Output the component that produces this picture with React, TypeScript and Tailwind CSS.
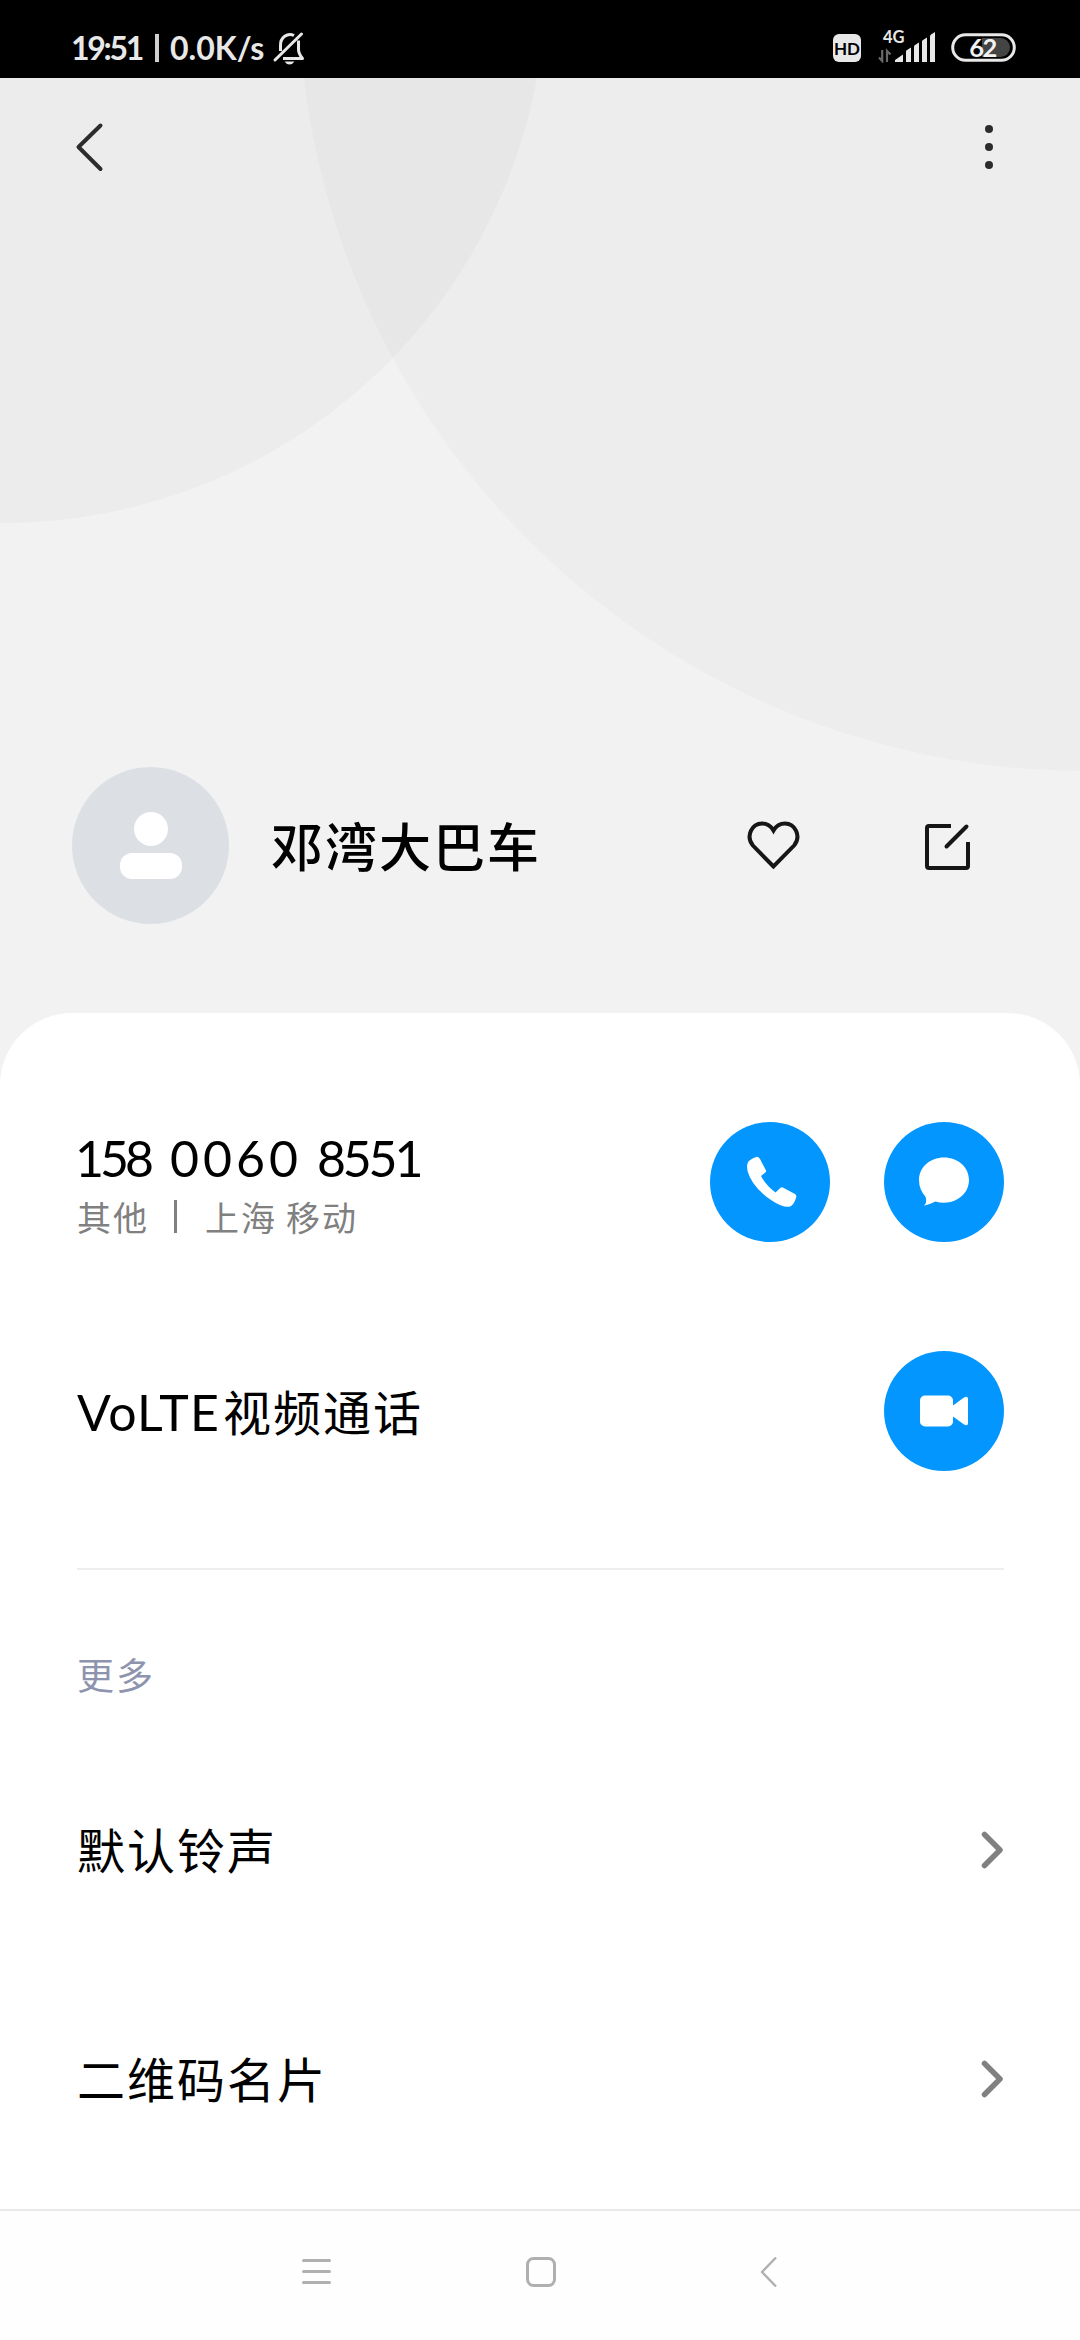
import type { ReactNode } from "react";

const latin = "font-['Lato','Noto_Sans_CJK_SC',sans-serif]";
const cjk = "font-['Noto_Sans_CJK_SC',sans-serif]";

function StatusBar() {
  return (
    <header className="flex h-[78px] items-start justify-between bg-black pl-[71px] pr-[64px] text-[#e8e8e8]">
      <div className={`${latin} flex items-start pt-[28px] text-[32px] leading-[40px] font-bold`}>
        <span className="w-[72px] whitespace-nowrap tracking-[-2.3px]">19:51</span>
        <span className="mt-[6px] ml-[12px] h-[28px] w-[4px] bg-[#d0d0d0]" />
        <span className="ml-[11px] w-[96px] whitespace-nowrap">0.0K/s</span>
        <svg className="ml-[6px] mt-[2px]" width="36" height="36" viewBox="0 0 36 36" fill="none" stroke="currentColor" strokeWidth="3">
          <path d="M8.500 21v-5.500A9.500 10.500 0 0 1 22 5.500" />
          <path d="M26.500 10.500v9c0 3.500 1.500 6 4 9H11" strokeLinejoin="round" />
          <path d="M3 30 29.500 4" strokeLinecap="round" />
          <path d="M12.500 31.500h10q-2 3-5 3t-5-3z" fill="currentColor" stroke="none" />
        </svg>
      </div>
      <div className="flex items-start pt-[23px]">
        <span className="mt-[11px] flex h-[28px] w-[28px] items-center justify-center rounded-[6px] bg-[#e8e8e8] font-['Lato',sans-serif] text-[17px] leading-none font-bold text-black">
          <span>HD</span>
        </span>
        <svg className="ml-[17px]" width="58" height="40" viewBox="0 -8 58 40" fill="#e8e8e8">
          <text x="5" y="12" fontSize="16.500" fontWeight="700" fontFamily="Lato, sans-serif">4G</text>
          <path d="M17 31v-2l8-5.500V31z M28 31V20.500q0-.8 1-1.500l4-2.500V31z M36 31V15.500q0-.8 1-1.500l4-2.500V31z M44 31V10.500q0-.8 1-1.500l4-2.500V31z M52 31V5.500q0-1 1-2l4-2.500V31z" />
          <path d="M4.200 19v11L1 26.500M9 31V20l3.500 3.500" fill="none" stroke="#6a6a6a" strokeWidth="2.200" />
        </svg>
        <svg className="ml-[15px] mt-[10px]" width="65" height="29" viewBox="0 0 65 29">
          <rect x="1.700" y="1.700" width="61.600" height="25.600" rx="12.800" fill="none" stroke="#e8e8e8" strokeWidth="3" />
          <path d="M31 5h18.500a9.500 9.500 0 0 1 0 19H31z" fill="#444" />
          <text x="31.500" y="23.500" textAnchor="middle" fontSize="25.500" fontWeight="700" fontFamily="Lato, sans-serif" fill="#f2f2f2" letterSpacing="-1.600">62</text>
        </svg>
      </div>
    </header>
  );
}

function Avatar() {
  return (
    <div className="flex h-[157px] w-[157px] flex-col items-center rounded-full bg-[#dcdfe4] pt-[45px]">
      <span className="h-[34px] w-[34px] rounded-full bg-white" />
      <span className="mt-[7px] h-[26px] w-[62px] rounded-[12px] bg-white" />
    </div>
  );
}

function Hero() {
  return (
    <section className="relative h-[935px] overflow-hidden bg-[#f2f2f2]">
      <svg className="absolute inset-0" width="1080" height="935" viewBox="0 78 1080 935">
        <circle cx="3" cy="-20" r="543" fill="#000" fillOpacity="0.025" />
        <circle cx="1085" cy="-16" r="787" fill="#000" fillOpacity="0.021" />
      </svg>
      <div className="relative flex h-full flex-col">
        <nav className="flex h-[138px] items-center justify-between pl-[73px] pr-[87px]">
          <svg width="34" height="52" viewBox="0 0 34 52" fill="none" stroke="#2c2c2c" strokeWidth="4" strokeLinecap="round" strokeLinejoin="round">
            <path d="M27.500 4.500 5.500 26l22 22" />
          </svg>
          <div className="flex flex-col gap-[10px]">
            <span className="h-[8px] w-[8px] rounded-full bg-[#2c2c2c]" />
            <span className="h-[8px] w-[8px] rounded-full bg-[#2c2c2c]" />
            <span className="h-[8px] w-[8px] rounded-full bg-[#2c2c2c]" />
          </div>
        </nav>
        <div className="mt-[551px] flex h-[157px] items-center pl-[72px]">
          <Avatar />
          <h1 className={`${cjk} ml-[42px] -mt-[1px] w-[476px] text-[52px] leading-[76px] font-medium tracking-[2px] text-black`}>邓湾大巴车</h1>
          <svg width="54" height="50" viewBox="0 0 54 50" fill="none" stroke="#161616" strokeWidth="4">
            <path d="M26.500 45.500 5.700 24.300C-1.500 15 5 2.500 15 2.500q7.500 0 11.500 7 4-7 11.500-7c10 0 16.500 12.500 9.300 21.800z" />
          </svg>
          <svg className="ml-[123px] mt-[3px]" width="48" height="50" viewBox="0 0 48 50" fill="none" stroke="#161616" strokeWidth="4">
            <path d="M27 4H5q-2 0-2 2v38q0 2 2 2h37q2 0 2-2V20" />
            <path d="M22.500 24.500 42.500 4.500" strokeLinecap="round" />
          </svg>
        </div>
      </div>
    </section>
  );
}

function RoundAction({ children }: { children: ReactNode }) {
  return (
    <button className="h-[120px] w-[120px] rounded-full bg-[#0396ff]">
      <svg width="120" height="120" viewBox="0 0 120 120" fill="#fff">
        {children}
      </svg>
    </button>
  );
}

function Chevron() {
  return (
    <svg width="24" height="40" viewBox="0 0 24 40" fill="none" stroke="#808080" strokeWidth="5.500" strokeLinecap="round" strokeLinejoin="round">
      <path d="M4.500 4.500 20 20 4.500 35.500" />
    </svg>
  );
}

function MenuRow({ label }: { label: string }) {
  return (
    <div className="flex h-[229px] items-center justify-between">
      <span className={`${cjk} -mt-[4px] text-[48px] leading-[70px] tracking-[2px] text-black`}>{label}</span>
      <Chevron />
    </div>
  );
}

export default function App() {
  return (
    <div className="flex h-[2340px] w-[1080px] flex-col overflow-hidden bg-[#f2f2f2]">
      <StatusBar />
      <Hero />
      <main className="h-[1196px] shrink-0 rounded-t-[72px] bg-white pt-[54px] pr-[76px] pl-[77px]">
        <div className="flex h-[230px] items-center justify-between">
          <div className="mt-[7px]">
            <p className={`${latin} -mt-px flex text-[50px] leading-[60px] whitespace-pre text-black`}>
              <span className="-ml-[2px] w-[95px] tracking-[-4px]">{"158 "}</span>
              <span className="w-[147px] tracking-[4px]">{"0060 "}</span>
              <span className="tracking-[-3.200px]">8551</span>
            </p>
            <p className={`${cjk} mt-[3px] flex h-[52px] items-center text-[34px] leading-[52px] tracking-[2px] text-[#808080]`}>
              <span>其他</span>
              <span className="ml-[25px] h-[33px] w-[3px] bg-[#808080]" />
              <span className="ml-[28px]">上海</span>
              <span className="ml-[9px]">移动</span>
            </p>
          </div>
          <div className="flex gap-[54px]">
            <RoundAction>
              <path d="M37 44q0-6 9-9 2.500-.7 4 2l6 11.500q.5 1-.5 1.800L51 54q5 9.500 14.500 16.500l5-4.700q1-.8 2.300-.2L85 72q2 1.300 1 4-2.500 8-7 8.800-7 .7-18-6.800Q42 65 37.500 49z" />
            </RoundAction>
            <RoundAction>
              <path d="M60 35.500c14 0 25 9.800 25 22.500S74 80.700 60 80.700q-4.500 0-8.500-1.200-6 3-11.500 4.200 3.500-3.500 1.500-9Q35 67.500 35 58c0-12.700 11-22.500 25-22.500z" />
            </RoundAction>
          </div>
        </div>
        <div className="flex h-[228px] items-center justify-between">
          <span className={`${latin} flex items-baseline text-black`}>
            <span className="w-[146px] text-[50px] leading-[70px] whitespace-nowrap tracking-[1.200px]">VoLTE</span>
            <span className={`${cjk} text-[48px] leading-[70px] tracking-[2px]`}>视频通话</span>
          </span>
          <RoundAction>
            <rect x="36" y="44.500" width="33" height="31" rx="5" />
            <path d="M69 54.500 80 46.500q4-2 4 1.500v24q0 3.500-4 1.500l-11-8z" />
          </RoundAction>
        </div>
        <div className="mt-[43px] h-[2px] bg-[#eeeeee]" />
        <h2 className={`${cjk} mt-[76px] h-[56px] text-[37px] leading-[56px] tracking-[2px] text-[#8e94ad]`}>更多</h2>
        <div className="mt-[33px]">
          <MenuRow label="默认铃声" />
          <MenuRow label="二维码名片" />
        </div>
      </main>
      <footer className="flex h-[131px] shrink-0 items-start border-t-2 border-[#e9e9e9] bg-[#fefefe] pt-[43px] pl-[299px]">
        <svg width="34" height="36" viewBox="0 0 34 36" stroke="#b0b0b0" strokeWidth="3" strokeLinecap="round">
          <path d="M4.500 6.500h26M4.500 17.500h26M4.500 28.500h26" />
        </svg>
        <svg className="ml-[192px]" width="34" height="36" viewBox="0 0 34 36" fill="none" stroke="#b0b0b0" strokeWidth="3">
          <rect x="2.500" y="4.500" width="27" height="27" rx="6" />
        </svg>
        <svg className="ml-[199px]" width="34" height="36" viewBox="0 0 34 36" fill="none" stroke="#b0b0b0" strokeWidth="2.500" strokeLinejoin="round">
          <path d="M18 3.500 4 18l14 14.500" />
        </svg>
      </footer>
    </div>
  );
}
